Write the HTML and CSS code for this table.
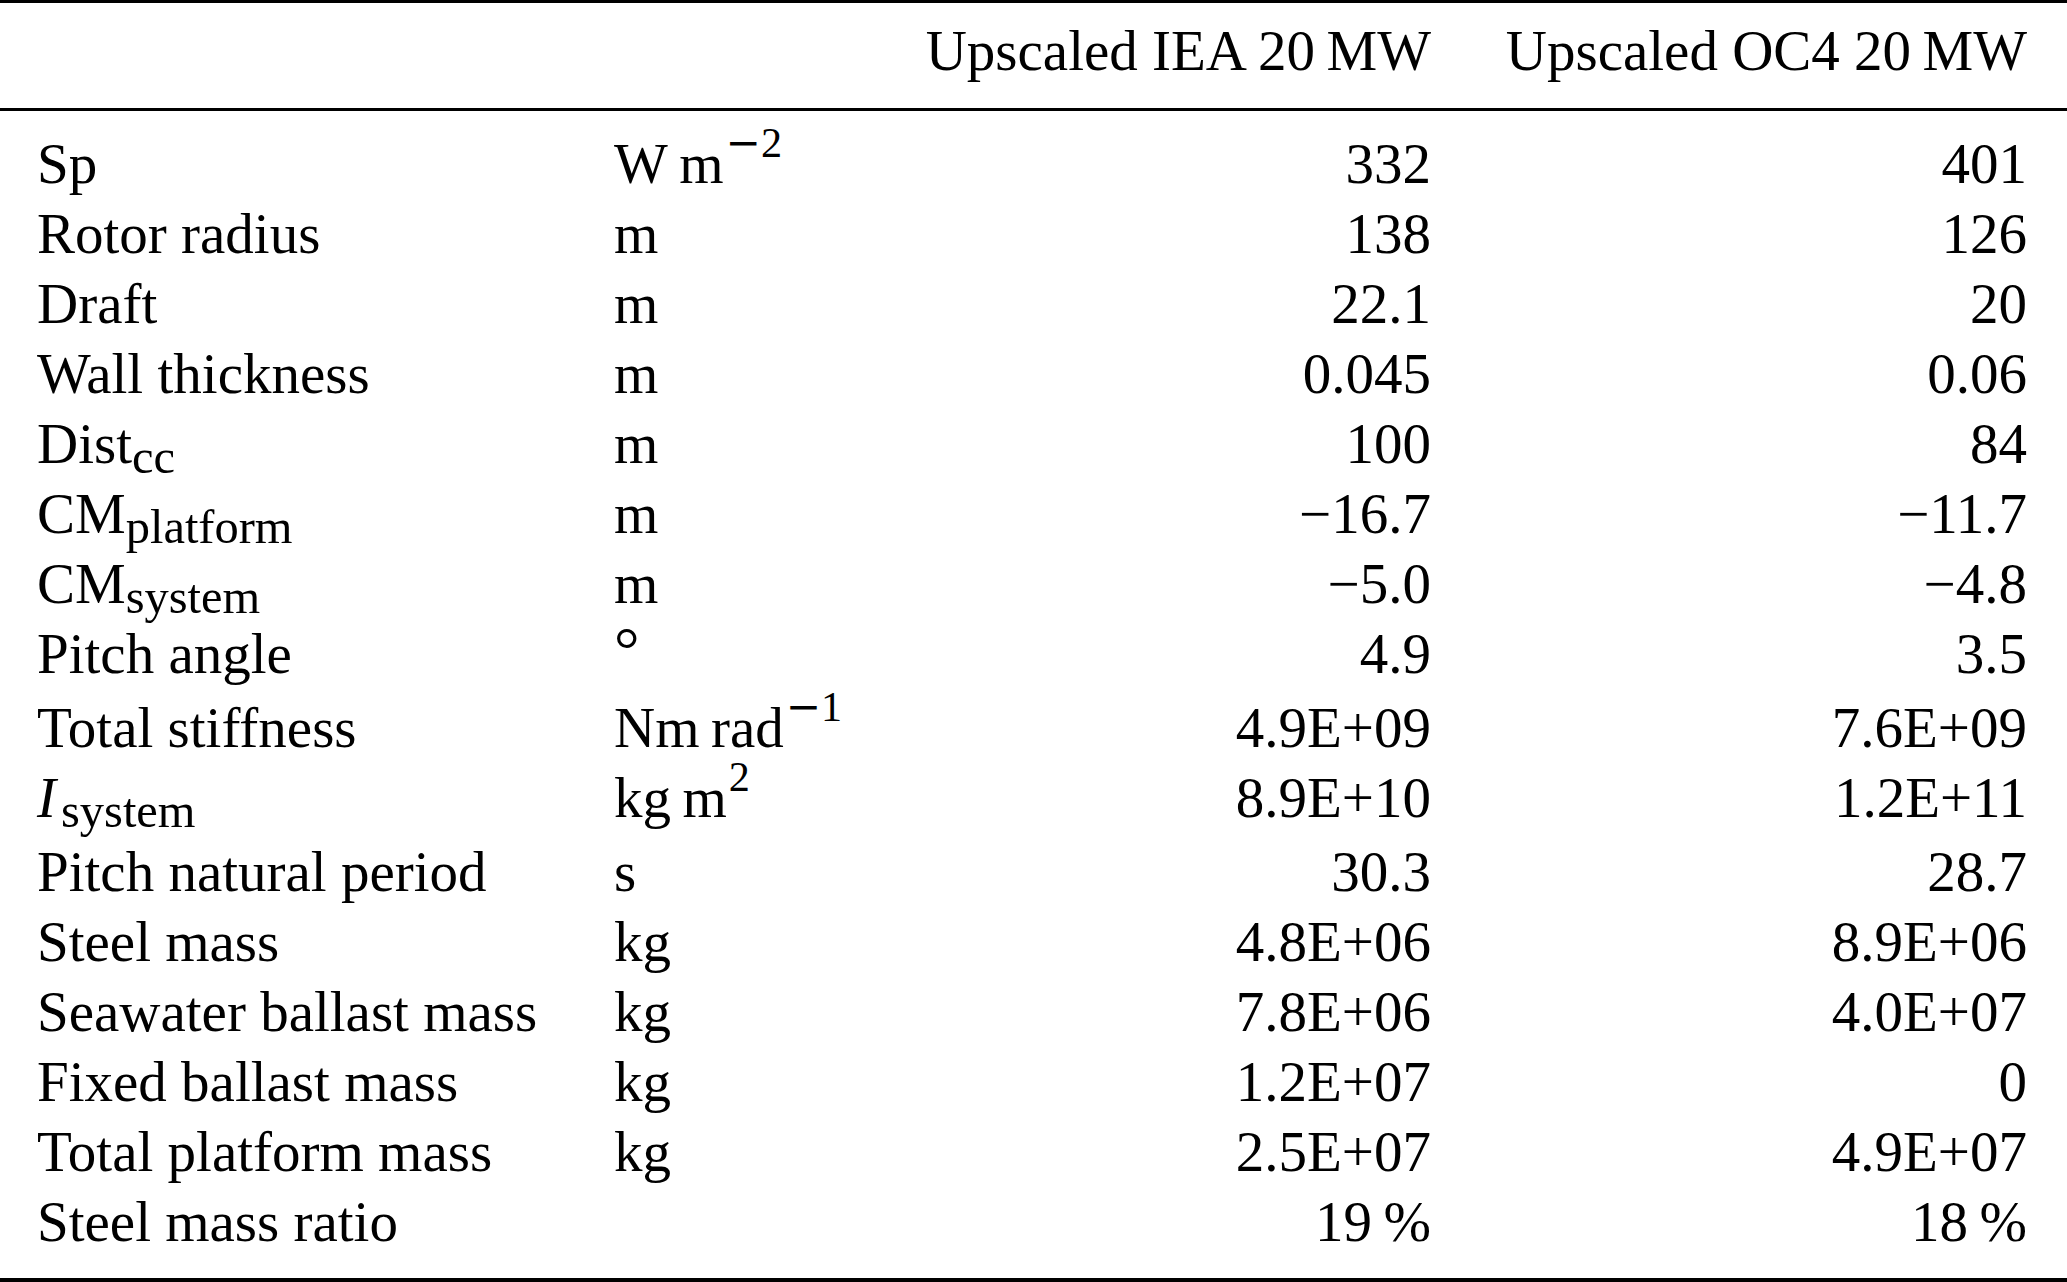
FILE: index.html
```html
<!DOCTYPE html>
<html>
<head>
<meta charset="utf-8">
<link rel="stylesheet" href="styles.css">
</head>
<body>
<div class="wrap">
<table class="tbl">
  <colgroup>
    <col class="c1"><col class="c2"><col class="c3"><col class="c4">
  </colgroup>
  <thead>
    <tr class="head">
      <th class="name"></th>
      <th class="unit"></th>
      <th class="num">Upscaled IEA 20&#8201;MW</th>
      <th class="num last">Upscaled OC4 20&#8201;MW</th>
    </tr>
  </thead>
  <tbody>
    <tr class="first"><td class="name">Sp</td><td class="unit">W&#8201;m<span class="sup"><span class="mm">&minus;</span>2</span></td><td class="num">332</td><td class="num last">401</td></tr>
    <tr><td class="name">Rotor radius</td><td class="unit">m</td><td class="num">138</td><td class="num last">126</td></tr>
    <tr><td class="name">Draft</td><td class="unit">m</td><td class="num">22.1</td><td class="num last">20</td></tr>
    <tr><td class="name">Wall thickness</td><td class="unit">m</td><td class="num">0.045</td><td class="num last">0.06</td></tr>
    <tr><td class="name">Dist<span class="sub">cc</span></td><td class="unit">m</td><td class="num">100</td><td class="num last">84</td></tr>
    <tr><td class="name">CM<span class="sub">platform</span></td><td class="unit">m</td><td class="num">&minus;16.7</td><td class="num last">&minus;11.7</td></tr>
    <tr><td class="name">CM<span class="sub">system</span></td><td class="unit">m</td><td class="num">&minus;5.0</td><td class="num last">&minus;4.8</td></tr>
    <tr><td class="name">Pitch angle</td><td class="unit"><span class="deg">&#176;</span></td><td class="num">4.9</td><td class="num last">3.5</td></tr>
    <tr class="tall"><td class="name">Total stiffness</td><td class="unit">Nm&#8201;rad<span class="sup"><span class="mm">&minus;</span>1</span></td><td class="num">4.9E+09</td><td class="num last">7.6E+09</td></tr>
    <tr><td class="name"><i class="var">I</i><span class="sub">system</span></td><td class="unit">kg&#8201;m<span class="sup">2</span></td><td class="num">8.9E+10</td><td class="num last">1.2E+11</td></tr>
    <tr class="tall"><td class="name">Pitch natural period</td><td class="unit">s</td><td class="num">30.3</td><td class="num last">28.7</td></tr>
    <tr><td class="name">Steel mass</td><td class="unit">kg</td><td class="num">4.8E+06</td><td class="num last">8.9E+06</td></tr>
    <tr><td class="name">Seawater ballast mass</td><td class="unit">kg</td><td class="num">7.8E+06</td><td class="num last">4.0E+07</td></tr>
    <tr><td class="name">Fixed ballast mass</td><td class="unit">kg</td><td class="num">1.2E+07</td><td class="num last">0</td></tr>
    <tr><td class="name">Total platform mass</td><td class="unit">kg</td><td class="num">2.5E+07</td><td class="num last">4.9E+07</td></tr>
    <tr class="final"><td class="name">Steel mass ratio</td><td class="unit"></td><td class="num">19&#8201;%</td><td class="num last">18&#8201;%</td></tr>
  </tbody>
</table>
</div>
</body>
</html>
```

FILE: styles.css
```css
html, body {
  margin: 0;
  padding: 0;
  background: #ffffff;
}

.wrap {
  width: 2067px;
  height: 1282px;
  overflow: hidden;
}

.tbl {
  width: 2067px;
  table-layout: fixed;
  border-collapse: collapse;
  font-family: "Liberation Serif", "Times New Roman", serif;
  font-size: 57px;
  color: #000;
  border-top: 3px solid #000;
  border-bottom: 4px solid #000;
}

.c1 { width: 614px; }
.c2 { width: 300px; }
.c3 { width: 517px; }
.c4 { width: 636px; }

.tbl th,
.tbl td {
  padding: 0;
  font-weight: normal;
  white-space: nowrap;
  line-height: 70px;
  vertical-align: baseline;
}

.head th {
  padding-top: 13px;
  padding-bottom: 22px;
  border-bottom: 3px solid #000;
}

.name {
  text-align: left;
  padding-left: 37px !important;
}

.unit {
  text-align: left;
}

.num {
  text-align: right;
}

.last {
  padding-right: 40px !important;
}

.first td {
  padding-top: 18px;
}

.tall td {
  padding-top: 4px;
}

.final td {
  padding-bottom: 21px;
}

.sup {
  font-size: 0.74em;
  vertical-align: 26px;
  line-height: 0;
  margin-left: 2px;
}

.mm {
  font-family: "DejaVu Serif", "Liberation Serif", serif;
}

.sub {
  font-size: 0.85em;
  vertical-align: -10px;
  line-height: 0;
}

.var {
  margin-right: 5px;
}

.deg {
  font-size: 1.12em;
  vertical-align: 2px;
  line-height: 0;
}
```
